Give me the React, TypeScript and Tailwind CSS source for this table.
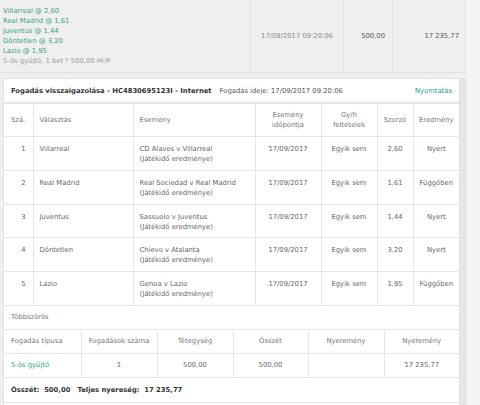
import React from 'react';

const picks = [
    { no: 1, choice: 'Villarreal', event: 'CD Alaves v Villarreal', odds: '2,60', result: 'Nyert' },
    { no: 2, choice: 'Real Madrid', event: 'Real Sociedad v Real Madrid', odds: '1,61', result: 'Függőben' },
    { no: 3, choice: 'Juventus', event: 'Sassuolo v Juventus', odds: '1,44', result: 'Nyert' },
    { no: 4, choice: 'Döntetlen', event: 'Chievo v Atalanta', odds: '3,20', result: 'Nyert' },
    { no: 5, choice: 'Lazio', event: 'Genoa v Lazio', odds: '1,95', result: 'Függőben' },
];

const SummaryRow: React.FC = () => (
    <div className="flex h-[73px] w-[465px] bg-[#efefef] border-b border-[#e2e2e2]">
        <div className="w-[251px] pl-[3px] pt-[6px] border-r border-[#e4e4e4]">
            {picks.map(p => (
                <div key={p.no} className="text-[#3a9f86]">{p.choice} @ {p.odds}</div>
            ))}
            <div className="text-[#9a9a9a]">5-ös gyűjtő, 1 bet * 500,00 HUF</div>
        </div>
        <div className="w-[93px] flex items-center justify-center text-[#8a8a8a] border-r border-[#e4e4e4]">17/09/2017 09:20:06</div>
        <div className="w-[49px] flex items-center justify-end pr-[7px] text-[#555] border-r border-[#e4e4e4]">500,00</div>
        <div className="flex-1 flex items-center justify-end pr-[5px] text-[#555] border-r border-[#e4e4e4]">17 235,77</div>
    </div>
);

const th = 'border border-[#e6e6e6] font-normal text-[#777] align-middle';
const td = 'border border-[#e6e6e6] text-[#666] align-top pt-[7px]';

const SelectionsTable: React.FC = () => (
    <table className="w-full table-fixed border-collapse">
        <thead>
            <tr className="h-[33px]">
                <th className={`${th} w-[29px] text-left pl-[7px] border-l-0`}>Szá.</th>
                <th className={`${th} w-[100px] text-left pl-[6px]`}>Választás</th>
                <th className={`${th} w-[122px] text-left pl-[6px]`}>Esemény</th>
                <th className={`${th} w-[66px] text-center`}>Esemény<br />időpontja</th>
                <th className={`${th} w-[56px] text-center`}>Gy/h<br />feltételek</th>
                <th className={`${th} w-[36px] text-center`}>Szorzó</th>
                <th className={`${th} text-center border-r-0`}>Eredmény</th>
            </tr>
        </thead>
        <tbody>
            {picks.map(p => (
                <tr key={p.no} className="h-[33.8px]">
                    <td className={`${td} text-right pr-[7px] border-l-0`}>{p.no}</td>
                    <td className={`${td} pl-[6px]`}>{p.choice}</td>
                    <td className={`${td} pl-[6px]`}>{p.event}<br />(Játékidő eredménye)</td>
                    <td className={`${td} text-center`}>17/09/2017</td>
                    <td className={`${td} text-center`}>Egyik sem</td>
                    <td className={`${td} text-center`}>{p.odds}</td>
                    <td className={`${td} text-center border-r-0`}>{p.result}</td>
                </tr>
            ))}
        </tbody>
    </table>
);

const MultipleTable: React.FC = () => {
    const cell = 'border border-[#e6e6e6] text-center align-middle';
    return (
        <table className="w-full table-fixed border-collapse">
            <thead>
                <tr className="h-[24px]">
                    <th className={`${cell} w-[77px] text-left pl-[7px] font-normal text-[#777] border-l-0`}>Fogadás típusa</th>
                    <th className={`${cell} w-[76px] font-normal text-[#777]`}>Fogadások száma</th>
                    <th className={`${cell} w-[76px] font-normal text-[#777]`}>Tétegység</th>
                    <th className={`${cell} w-[75px] font-normal text-[#777]`}>Összét</th>
                    <th className={`${cell} w-[76px] font-normal text-[#777]`}>Nyeremény</th>
                    <th className={`${cell} font-normal text-[#777] border-r-0`}>Nyeremény</th>
                </tr>
            </thead>
            <tbody>
                <tr className="h-[24px] text-[#666]">
                    <td className={`${cell} text-left pl-[7px] text-[#2e9e7c] border-l-0`}>5-ös gyűjtő</td>
                    <td className={cell}>1</td>
                    <td className={cell}>500,00</td>
                    <td className={cell}>500,00</td>
                    <td className={cell}></td>
                    <td className={`${cell} border-r-0`}>17 235,77</td>
                </tr>
            </tbody>
        </table>
    );
};

export default function App() {
    return (
        <div className="w-[480px] h-[405px] overflow-hidden flex bg-[#f5f5f5] font-['DejaVu_Sans',sans-serif] text-[6.8px] leading-[10px]">
            <div className="w-[467px] flex flex-col bg-[#f0f0f0]">
                <SummaryRow />
                <div className="flex flex-1 pt-[5px]">
                    <div className="w-[3px]" />
                    <div className="w-[457px] bg-white border border-[#e2e2e2] border-b-0">
                        <div className="h-[24px] flex items-center px-[7px] border-b border-[#e6e6e6]">
                            <span className="font-bold text-[#333]">Fogadás visszaigazolása - HC4830695123I - Internet</span>
                            <span className="ml-[8px] text-[#555]">Fogadás ideje: 17/09/2017 09:20:06</span>
                            <span className="ml-auto text-[#1f9a8e]">Nyomtatás</span>
                        </div>
                        <SelectionsTable />
                        <div className="h-[23px] flex items-center pl-[7px] text-[#777]">Többszörös</div>
                        <MultipleTable />
                        <div className="h-[25px] flex items-center pl-[7px] font-bold text-[#333] border-b border-[#e6e6e6]">
                            Összét:&nbsp; 500,00&nbsp;&nbsp; Teljes nyereség:&nbsp; 17 235,77
                        </div>
                    </div>
                    <div className="w-[7px] bg-[#e6e6e6]" />
                </div>
            </div>
            <div className="flex-1 bg-[#f5f5f5]" />
        </div>
    );
}
